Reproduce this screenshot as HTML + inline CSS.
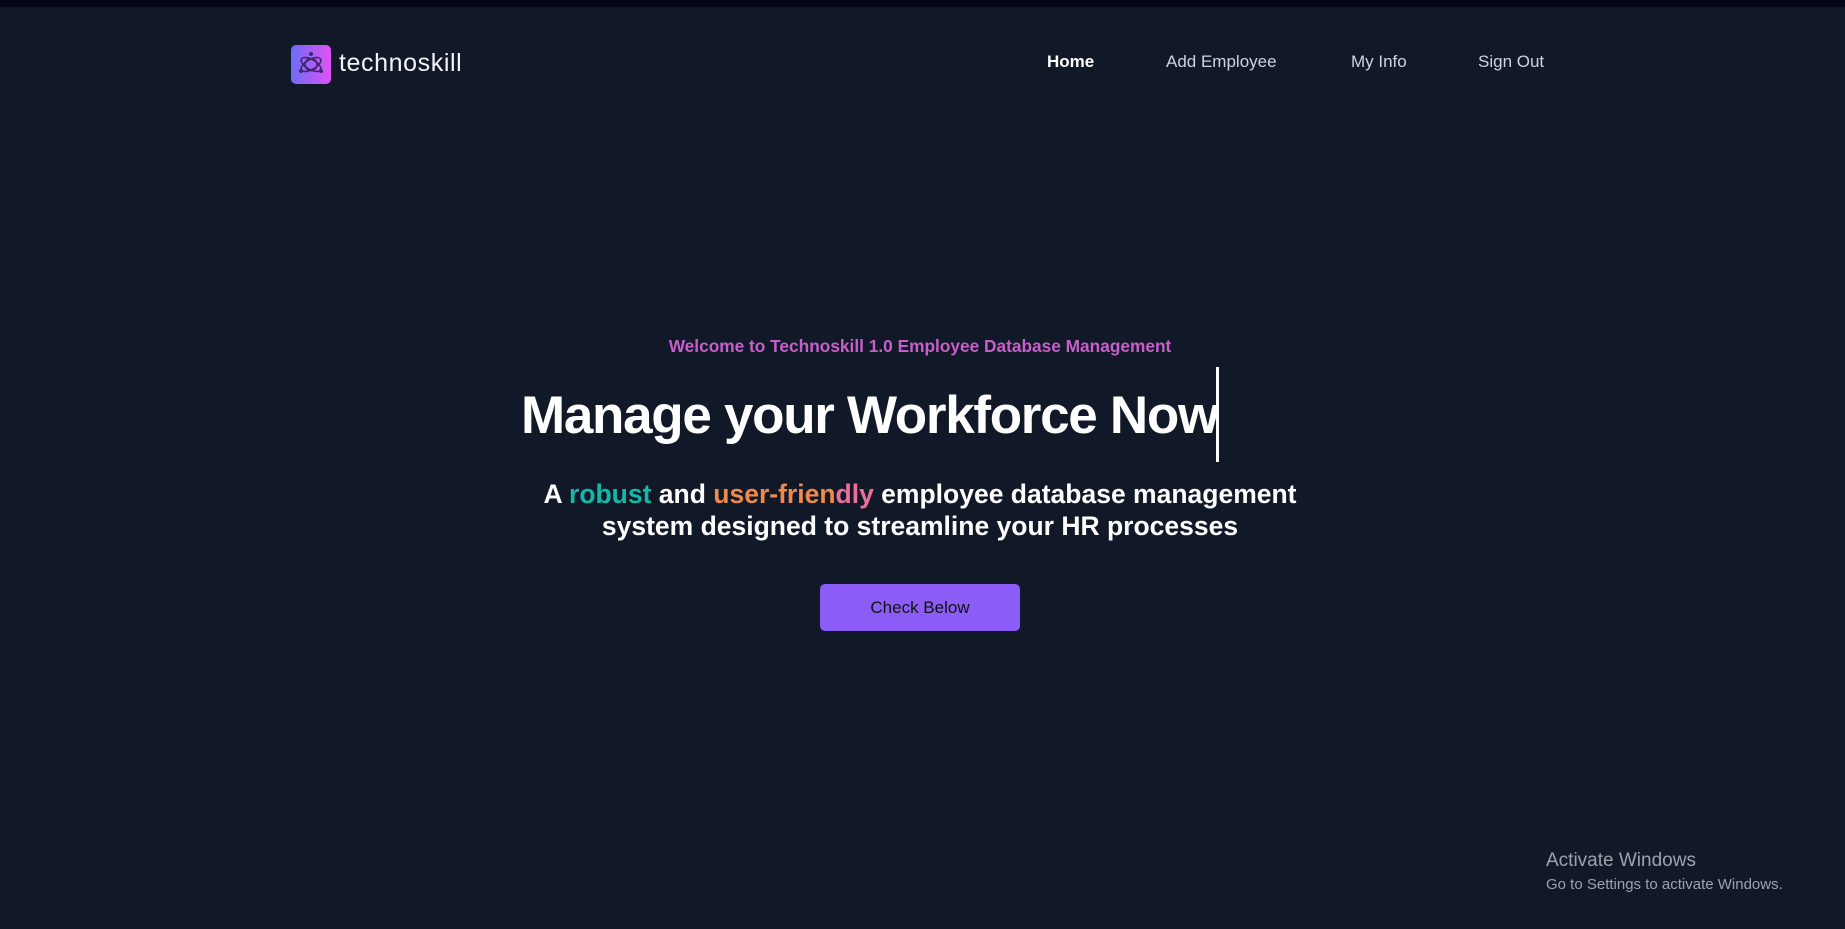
<!DOCTYPE html>
<html><head><meta charset="utf-8"><style>
*{margin:0;padding:0;box-sizing:border-box}
html,body{width:1845px;height:929px;overflow:hidden;background:#111827;font-family:"Liberation Sans",sans-serif}
.top{position:absolute;left:0;top:0;width:1845px;height:7px;background:#030617}
.logo{position:absolute;left:291px;top:45px;width:40px;height:39px;border-radius:5px;background:linear-gradient(90deg,#6d6cf7,#e052f5)}
.brand{position:absolute;left:339px;top:49px;font-size:25px;color:#f3f4f6;letter-spacing:0.6px}
.nav{position:absolute;top:52px;font-size:17px;color:#cbd5e1}
.welcome{position:absolute;left:0;width:1840px;top:336px;text-align:center;font-size:17.3px;font-weight:bold;color:#c65fc9}
h1{position:absolute;left:521px;top:385px;font-size:53px;font-weight:bold;color:#fff;white-space:nowrap;letter-spacing:-1.3px;width:697px;overflow:hidden}
.cur{position:absolute;left:1216px;top:367px;width:3px;height:95px;background:#fff}
.p{position:absolute;left:0;width:1840px;top:478px;text-align:center;font-size:26.5px;font-weight:bold;color:#fff;line-height:32px}
.btn{position:absolute;left:820px;top:584px;width:200px;height:47px;border-radius:5px;background:#8b5cf6;color:#111;font-size:17px;text-align:center;line-height:47px}
.aw{position:absolute;left:1546px;top:850px;color:#9ca3af;font-size:19px}
.aw2{position:absolute;left:1546px;top:876px;color:#9ca3af;font-size:15px}
</style></head><body>
<div class="top"></div>
<div class="logo"><svg width="40" height="39" viewBox="0 0 40 39"><g fill="none" stroke="#3b2a6b" stroke-width="1.6"><ellipse cx="20" cy="19.5" rx="11" ry="5" transform="rotate(30 20 19.5)"/><ellipse cx="20" cy="19.5" rx="11" ry="5" transform="rotate(-30 20 19.5)"/><circle cx="20" cy="19.5" r="6"/></g><circle cx="20" cy="9" r="2" fill="#3b2a6b"/><circle cx="10" cy="26" r="2" fill="#3b2a6b"/><circle cx="30" cy="26" r="2" fill="#3b2a6b"/></svg></div>
<div class="brand">technoskill</div>
<div class="nav" style="left:1047px;color:#fff;font-weight:bold">Home</div>
<div class="nav" style="left:1166px">Add Employee</div>
<div class="nav" style="left:1351px">My Info</div>
<div class="nav" style="left:1478px">Sign Out</div>
<div class="welcome">Welcome to Technoskill 1.0 Employee Database Management</div>
<h1>Manage your Workforce Now</h1>
<div class="cur"></div>
<div class="p">A <span style="color:#14b8a6">robust</span> and <span style="color:#f08a4b">user-frien</span><span style="color:#ec6f9a">dly</span> employee database management<br>system designed to streamline your HR processes</div>
<div class="btn">Check Below</div>
<div class="aw">Activate Windows</div>
<div class="aw2">Go to Settings to activate Windows.</div>
</body></html>
